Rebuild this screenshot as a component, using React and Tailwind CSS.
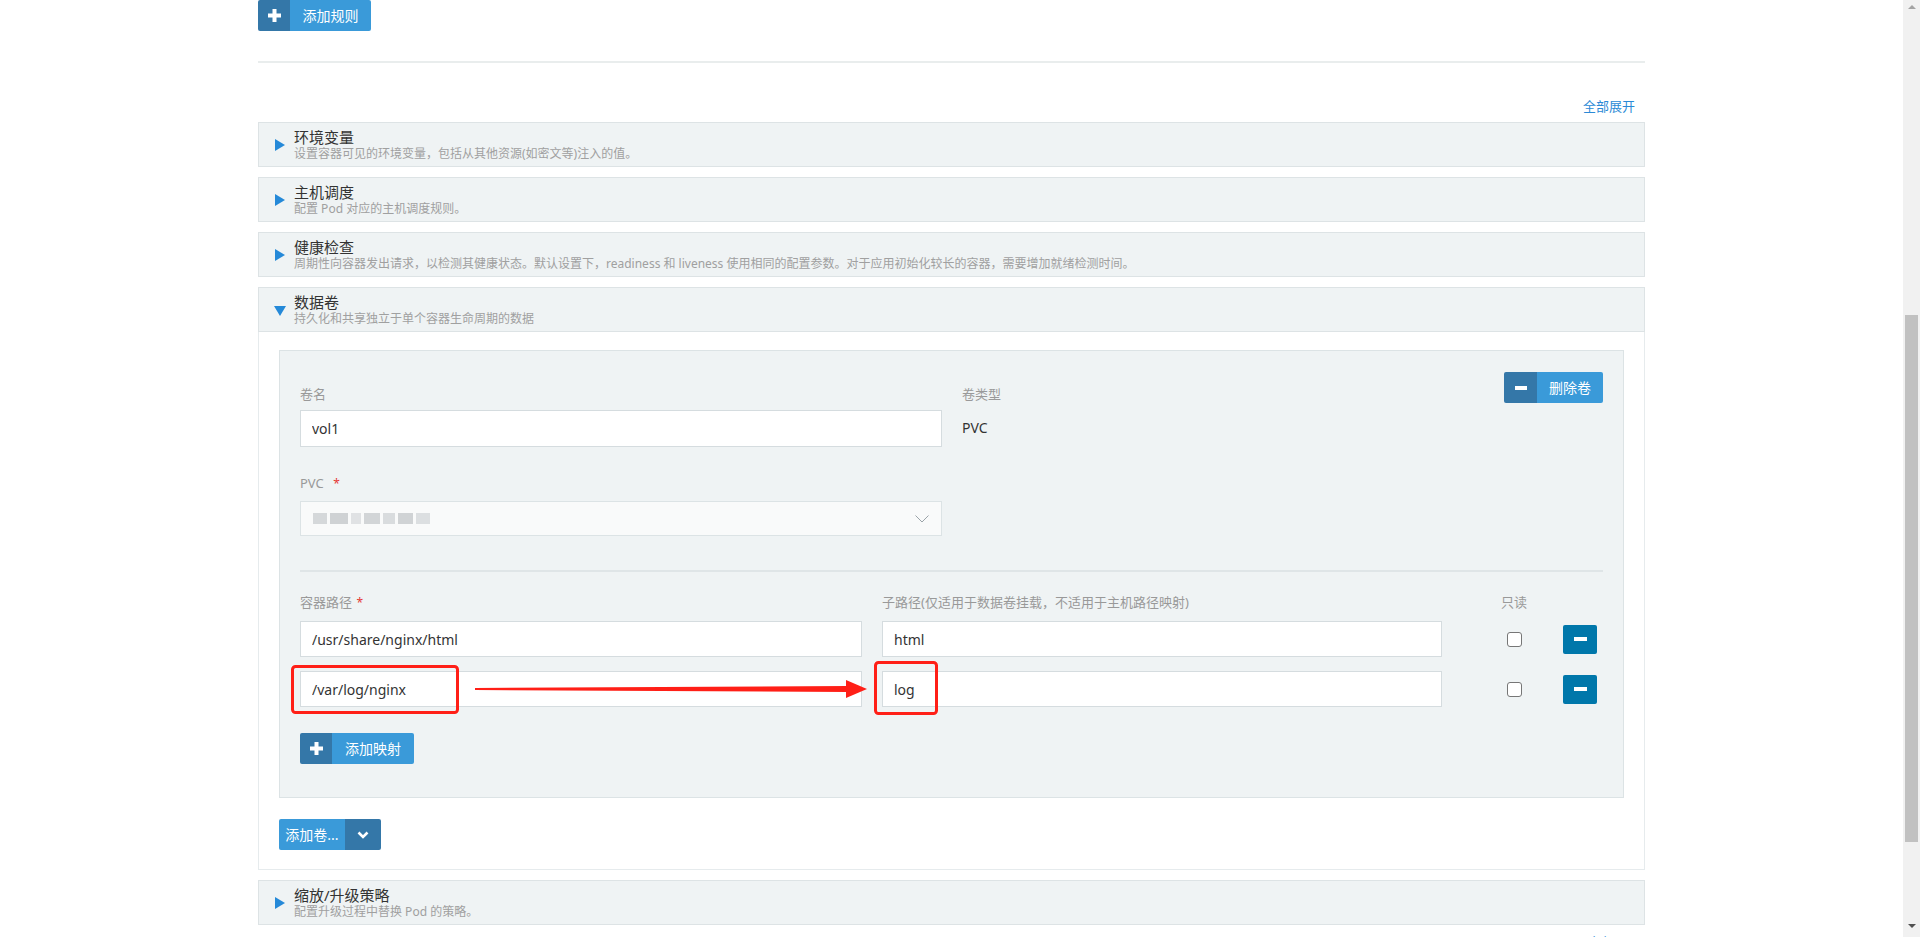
import React from "react";

const COLLAPSED = [
  { title: "环境变量", desc: "设置容器可见的环境变量，包括从其他资源(如密文等)注入的值。" },
  { title: "主机调度", desc: "配置 Pod 对应的主机调度规则。" },
  {
    title: "健康检查",
    desc: "周期性向容器发出请求，以检测其健康状态。默认设置下，readiness 和 liveness 使用相同的配置参数。对于应用初始化较长的容器，需要增加就绪检测时间。",
  },
];

const MOUNTS = [
  { path: "/usr/share/nginx/html", sub: "html" },
  { path: "/var/log/nginx", sub: "log" },
];

const PlusIcon = () => (
  <svg width="13" height="13" viewBox="0 0 13 13">
    <rect x="4.5" y="0" width="4" height="13" fill="#fff" />
    <rect x="0" y="4.5" width="13" height="4" fill="#fff" />
  </svg>
);

const MinusIcon = ({ w = 12 }) => <span className="block h-[4px] bg-white" style={{ width: w }} />;

const Caret = ({ open }) =>
  open ? (
    <span className="mt-[2px] h-0 w-0 border-x-[6px] border-t-[10px] border-x-transparent border-t-[#2589d8]" />
  ) : (
    <span className="h-0 w-0 border-y-[6px] border-l-[10px] border-y-transparent border-l-[#2589d8]" />
  );

// split button: dark icon part + lighter label part
function ActionButton({ icon, label, iconW = 32, labelW }) {
  return (
    <button className="flex h-[31px] items-stretch overflow-hidden rounded-[2px] text-[14px] text-white">
      <span className="flex items-center justify-center bg-[#3477a8]" style={{ width: iconW }}>
        {icon}
      </span>
      <span className="flex items-center justify-center bg-[#3a9ad9]" style={{ width: labelW }}>
        {label}
      </span>
    </button>
  );
}

function SectionHeader({ title, desc, open }) {
  return (
    <div className="flex h-[45px] items-center border border-[#dde3e5] bg-[#eff3f4] pl-[15px]">
      <span className="flex w-[12px] justify-center">
        <Caret open={open} />
      </span>
      <div className="ml-[8px] mt-[1px]">
        <div className="text-[15px] leading-[18px] text-[#333]">{title}</div>
        <div className="text-[12px] leading-[16px] text-[#a0a0a0]">{desc}</div>
      </div>
    </div>
  );
}

function Field({ value, className = "", h = 36 }) {
  return (
    <input
      readOnly
      value={value}
      style={{ height: h }}
      className={`block border border-[#d5dcdf] bg-white px-[11px] text-[14px] text-[#333] outline-none ${className}`}
    />
  );
}

const Label = ({ children, className = "" }) => (
  <div className={`text-[13px] leading-[18px] text-[#999] ${className}`}>{children}</div>
);

const Req = ({ className = "" }) => <span className={`text-[12px] text-[#e53935] ${className}`}>*</span>;

function RowRemove() {
  return (
    <button className="flex h-[29px] w-[34px] items-center justify-center rounded-[2px] bg-[#0077aa]">
      <MinusIcon w={13} />
    </button>
  );
}

function Checkbox() {
  return <span className="block h-[15px] w-[15px] rounded-[3px] border border-[#767676] bg-white" />;
}

// red call-out drawn over the second mount row
function Callout() {
  return (
    <svg
      className="pointer-events-none absolute left-[-20px] top-[-20px]"
      width="680"
      height="80"
      viewBox="0 0 680 80"
    >
      <rect x="12.5" y="15.5" width="165" height="46" rx="3" fill="none" stroke="#ff1f17" strokeWidth="3" />
      <rect x="595.5" y="11.5" width="61" height="51" rx="3" fill="none" stroke="#ff1f17" strokeWidth="3" />
      <polygon points="195,37 568,35 568,41 195,39" fill="#ff1f17" />
      <polygon points="566,29 587,38 566,47" fill="#ff1f17" />
    </svg>
  );
}

function VolumeCard() {
  return (
    <div className="border border-[#dce3e5] bg-[#eff3f4] px-[20px] pb-[33px] pt-[21px]">
      <div className="flex items-start">
        <div className="w-[642px] pt-[13px]">
          <Label>卷名</Label>
          <Field value="vol1" h={37} className="mt-[7px] w-full" />
        </div>
        <div className="ml-[20px] pt-[13px]">
          <Label>卷类型</Label>
          <div className="mt-[15px] text-[14px] leading-[20px] text-[#333]">PVC</div>
        </div>
        <div className="ml-auto">
          <ActionButton icon={<MinusIcon />} label="删除卷" iconW={33} labelW={66} />
        </div>
      </div>

      <Label className="mt-[27px]">
        PVC <Req className="ml-[6px]" />
      </Label>
      <div className="mt-[8px] flex h-[35px] w-[642px] items-center border border-[#dce3e5] bg-[#f9fafa] pl-[12px] pr-[12px]">
        <div className="flex items-center gap-[3px] blur-[0.6px]">
          <span className="h-[11px] w-[14px] bg-[#d5d8da]" />
          <span className="h-[11px] w-[18px] bg-[#cfd2d4]" />
          <span className="h-[11px] w-[10px] bg-[#e0e2e4]" />
          <span className="h-[11px] w-[16px] bg-[#d2d5d7]" />
          <span className="h-[11px] w-[12px] bg-[#d9dcde]" />
          <span className="h-[11px] w-[15px] bg-[#d0d3d5]" />
          <span className="h-[11px] w-[14px] bg-[#dcdfe1]" />
        </div>
        <svg className="ml-auto" width="14" height="8" viewBox="0 0 14 8">
          <polyline points="0.5,0.5 7,7 13.5,0.5" fill="none" stroke="#9aa3a8" strokeWidth="1" />
        </svg>
      </div>

      <div className="mt-[34px] h-[2px] bg-[#dfe5e7]" />

      <div className="mt-[21px] flex">
        <Label className="w-[562px]">
          容器路径 <Req className="ml-[1px]" />
        </Label>
        <Label className="ml-[20px] w-[560px]">子路径(仅适用于数据卷挂载，不适用于主机路径映射)</Label>
        <Label className="ml-[59px] w-[26px] whitespace-nowrap">只读</Label>
      </div>

      <div className="mt-[9px] flex flex-col gap-[14px]">
        {MOUNTS.map((m, i) => (
          <div key={m.path} className="relative flex items-center">
            <Field value={m.path} className="w-[562px]" />
            <Field value={m.sub} className="ml-[20px] w-[560px]" />
            <span className="ml-[59px] flex w-[26px] justify-center">
              <Checkbox />
            </span>
            <span className="ml-[36px]">
              <RowRemove />
            </span>
            {i === 1 && <Callout />}
          </div>
        ))}
      </div>

      <div className="mt-[26px]">
        <ActionButton icon={<PlusIcon />} label="添加映射" iconW={32} labelW={82} />
      </div>
    </div>
  );
}

function Scrollbar() {
  return (
    <div className="relative flex w-[17px] shrink-0 flex-col bg-[#f1f1f1]">
      <span className="mx-auto mt-[5px] h-0 w-0 border-x-[4px] border-b-[4px] border-x-transparent border-b-[#a3a3a3]" />
      <div className="mx-auto mt-[306px] h-[527px] w-[13px] bg-[#c1c1c1]" />
      <span className="mx-auto mt-[82px] h-0 w-0 border-x-[4px] border-t-[4px] border-x-transparent border-t-[#505050]" />
    </div>
  );
}

export default function App() {
  return (
    <div className="flex h-screen overflow-hidden bg-white font-['Noto_Sans','Noto_Sans_CJK_SC',sans-serif] text-[#333]">
      <div className="flex-1 overflow-hidden">
        <div className="mx-auto w-[1387px]">
          <ActionButton icon={<PlusIcon />} label="添加规则" iconW={32} labelW={81} />

          <div className="mt-[30px] h-[2px] bg-[#e9eded]" />

          <div className="mt-[35px] pr-[10px] text-right text-[13px] leading-[16px] text-[#2b8ad6]">全部展开</div>

          <div className="mt-[8px] flex flex-col gap-[10px]">
            {COLLAPSED.map((s) => (
              <SectionHeader key={s.title} title={s.title} desc={s.desc} />
            ))}

            <div>
              <SectionHeader open title="数据卷" desc="持久化和共享独立于单个容器生命周期的数据" />
              <div className="border border-t-0 border-[#e6ebed] px-[20px] pb-[19px] pt-[18px]">
                <VolumeCard />
                <div className="mt-[21px] flex">
                  <button className="flex h-[31px] items-stretch overflow-hidden rounded-[2px] text-[14px] text-white">
                    <span className="flex w-[66px] items-center justify-center bg-[#3a9ad9]">添加卷...</span>
                    <span className="flex w-[36px] items-center justify-center bg-[#3477a8]">
                      <svg width="12" height="8" viewBox="0 0 12 8">
                        <polyline points="1.5,1.5 6,6 10.5,1.5" fill="none" stroke="#fff" strokeWidth="2.6" />
                      </svg>
                    </span>
                  </button>
                </div>
              </div>
            </div>

            <SectionHeader title="缩放/升级策略" desc="配置升级过程中替换 Pod 的策略。" />
          </div>

          <div className="mt-[9px] pr-[2px] text-right text-[14px] leading-[18px] text-[#2b8ad6]">全部展开</div>
        </div>
      </div>
      <Scrollbar />
    </div>
  );
}
